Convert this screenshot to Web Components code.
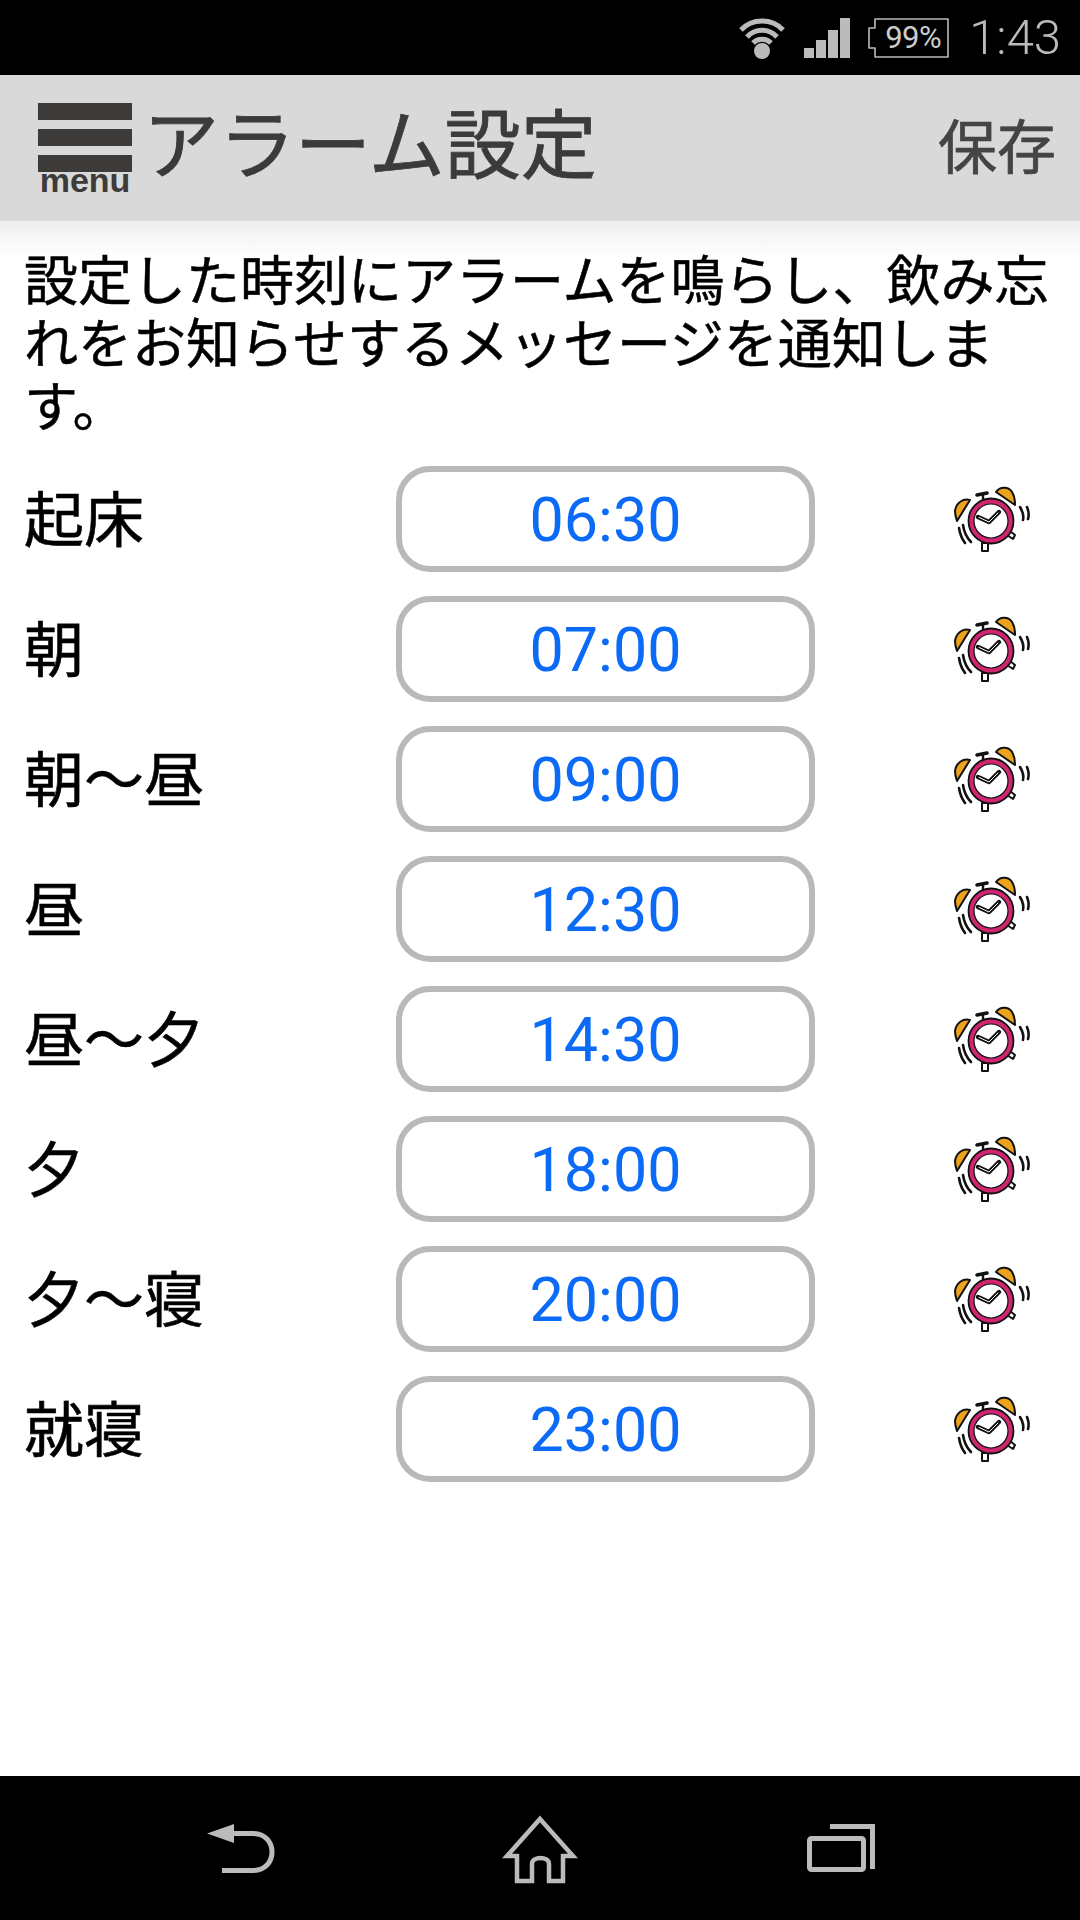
<!DOCTYPE html>
<html lang="ja">
<head>
<meta charset="utf-8">
<title>アラーム設定</title>
<style>
  html, body { margin: 0; padding: 0; background: #fff; }
  body { font-family: "Noto Sans CJK JP", "Noto Sans", sans-serif; }
</style>
</head>
<body>
<alarm-app></alarm-app>

<script>
const CJK = '"Noto Sans CJK JP", "Noto Sans", sans-serif';

class StatusBar extends HTMLElement {
    constructor() {
        super();
        this.attachShadow({ mode: 'open' });
        this.shadowRoot.innerHTML = `
<style>
  :host { display: flex; align-items: center; justify-content: flex-end; height: 75px; background: #000; color: #bbb; padding-right: 19px; box-sizing: border-box; font-family: Roboto, sans-serif; }
  svg { display: block; }
  .wifi { margin-right: 19px; }
  .signal { margin-right: 17px; }
  .battery { position: relative; width: 82px; height: 40px; margin-right: 20px; }
  .pct { position: absolute; left: 10px; right: 0; top: 0; bottom: 0; display: flex; align-items: center; justify-content: center; font-size: 31px; color: #ccc; letter-spacing: -0.5px; }
  .time { font-size: 49px; font-weight: 300; line-height: 75px; }
</style>
<svg class="wifi" width="46" height="42" viewBox="0 0 46 42" fill="none" stroke="#bbb" stroke-width="5">
  <path d="M2 13 C13 1 33 1 44 13"/>
  <path d="M8 20 C16 11 30 11 38 20"/>
  <path d="M14 26 C19 21 27 21 32 26"/>
  <circle cx="23" cy="34" r="8" fill="#bbb" stroke="none"/>
</svg>
<svg class="signal" width="46" height="40" viewBox="0 0 46 40" fill="#bbb">
  <rect x="0" y="30" width="10" height="10"/>
  <rect x="12" y="22" width="10" height="18"/>
  <rect x="24" y="12" width="10" height="28"/>
  <rect x="36" y="0" width="10" height="40"/>
</svg>
<div class="battery">
  <svg width="82" height="40" viewBox="0 0 82 40" fill="none" stroke="#bbb" stroke-width="1.6">
    <path d="M8 1 H81 V39 H8 V30 H2 V10 H8 Z" stroke-linejoin="round"/>
  </svg>
  <span class="pct">99%</span>
</div>
<span class="time">1:43</span>`;
    }
}

class AppHeader extends HTMLElement {
    constructor() {
        super();
        this.attachShadow({ mode: 'open' });
        this.shadowRoot.innerHTML = `
<style>
  :host { display: flex; align-items: center; height: 147px; background: #d9d9d9; color: #3d3a3a; padding: 0 24px 0 38px; box-sizing: border-box; position: relative; border-bottom: 1px solid #cfcfcf; }
  :host::after { content: ""; position: absolute; left: 0; right: 0; top: 100%; height: 36px; background: linear-gradient(#eeeeee, #fff); }
  .menu { width: 94px; height: 88px; margin-bottom: 2px; display: flex; flex-direction: column; gap: 9px; flex: none; position: relative; }
  .bar { height: 17px; background: #3d3a3a; }
  .menu span { position: absolute; left: 0; right: 0; top: 60px; font: bold 34px/34px "Liberation Sans", sans-serif; text-align: center; }
  h1 { flex: 1; margin: 0 0 16px 11px; font: 400 76px/1 ${CJK}; -webkit-text-stroke: 0.8px #3d3a3a; }
  .save { font: 400 59px/1 ${CJK}; color: #444; margin-bottom: 9px; -webkit-text-stroke: 0.7px #444; }
</style>
<div class="menu"><div class="bar"></div><div class="bar"></div><div class="bar"></div><span>menu</span></div>
<h1><slot name="title"></slot></h1>
<div class="save"><slot name="action"></slot></div>`;
    }
}

class AlarmClock extends HTMLElement {
    constructor() {
        super();
        this.attachShadow({ mode: 'open' });
        this.shadowRoot.innerHTML = `
<style>
  :host { display: block; width: 84px; height: 72px; }
  svg { display: block; }
</style>
<svg width="84" height="72" viewBox="0 0 84 72" fill="none" stroke="#111" stroke-linecap="round" stroke-linejoin="round">
  <path d="M20 17 C13 15 6 20 5 28 C5 32 6 35 7 38 Z" fill="#eea31c" stroke-width="2"/>
  <path d="M46 9 C50 3 60 3 63 11 C65 15 65 19 65 22 Z" fill="#eea31c" stroke-width="2"/>
  <path d="M33 11 L33 16" stroke-width="2.4"/>
  <path d="M27 12 L37 10" stroke-width="3.6"/>
  <path d="M32 60 L32 68 L38 68 L38 60 Z" fill="#fff" stroke-width="2"/>
  <path d="M57 52 L63 56 L65 52 L60 48 Z" fill="#fff" stroke-width="2"/>
  <circle cx="41" cy="38" r="22.5" fill="#d1266f" stroke-width="1.8"/>
  <circle cx="41" cy="38" r="17" fill="#fff" stroke-width="1.2"/>
  <path d="M28 34 L39 39 L49 29" stroke-width="4.4"/>
  <path d="M29 34.4 L39 39 L48 30" stroke="#fff" stroke-width="1"/>
  <path d="M70 24 C73 29 74 33 73 37 M77 24 C79 29 79 33 78 36" stroke-width="2.6"/>
  <path d="M9 45 C10 51 12 56 15 60 M13 42 C14 49 17 55 21 59" stroke-width="2.6"/>
</svg>`;
    }
}

class AlarmRow extends HTMLElement {
    constructor() {
        super();
        this.attachShadow({ mode: 'open' });
        this.shadowRoot.innerHTML = `
<style>
  :host { display: grid; grid-template-columns: 372px 419px 1fr; align-items: center; height: 105px; }
  .label { font: 400 60px/1 ${CJK}; color: #000; margin-bottom: 6px; -webkit-text-stroke: 0.6px #000; }
  .time { height: 106px; box-sizing: border-box; border: 6px solid #b9b9b9; border-radius: 34px; background: #fff; display: flex; align-items: center; justify-content: center; font: 400 61px/1 Roboto, sans-serif; color: #0b6bf6; padding-top: 3px; }
  .wrap { display: flex; justify-content: flex-start; padding-left: 135px; }
</style>
<div class="label"><slot name="label"></slot></div>
<div class="time"><slot name="time"></slot></div>
<div class="wrap"><alarm-clock></alarm-clock></div>`;
    }
}

class NavBar extends HTMLElement {
    constructor() {
        super();
        this.attachShadow({ mode: 'open' });
        this.shadowRoot.innerHTML = `
<style>
  :host { display: flex; height: 144px; background: #000; padding-top: 39px; box-sizing: border-box; align-items: flex-start; padding-left: 207px; }
  svg { display: block; flex: none; }
</style>
<svg width="68" height="50" viewBox="0 0 68 50" style="margin-top:9px" fill="none" stroke="#bbb" stroke-width="5">
  <path d="M0 9.5 L27 0 L27 19 Z" fill="#bbb" stroke="none"/>
  <path d="M25 9.5 H46 C58 9.5 65 18 65 28 C65 38 58 46.5 46 46.5 H15"/>
</svg>
<svg width="78" height="70" viewBox="0 0 78 70" style="margin-left:226px" fill="none" stroke="#bbb" stroke-width="4.5" stroke-linejoin="miter">
  <path d="M39 4 L72 41 H62 V66 H48 V49 C48 41 31 41 31 49 V66 H16 V41 H6 Z"/>
</svg>
<svg width="68" height="48" viewBox="0 0 68 48" style="margin-left:228px;margin-top:9px" fill="none" stroke="#bbb" stroke-width="5">
  <rect x="2.5" y="14.5" width="54" height="31" rx="2"/>
  <path d="M23 2.5 H65.5 V45"/>
</svg>`;
    }
}

class AlarmApp extends HTMLElement {
    constructor() {
        super();
        this.attachShadow({ mode: 'open' });
        const rows = [
            ['起床', '06:30'], ['朝', '07:00'], ['朝～昼', '09:00'], ['昼', '12:30'],
            ['昼～夕', '14:30'], ['夕', '18:00'], ['夕～寝', '20:00'], ['就寝', '23:00']
        ];
        this.shadowRoot.innerHTML = `
<style>
  :host { display: flex; flex-direction: column; width: 1080px; height: 1920px; overflow: hidden; background: #fff; }
  main { flex: 1; padding: 24px 25px 0 24px; position: relative; z-index: 1; }
  p { margin: 0 0 31px; font: 400 54px/63px ${CJK}; color: #000; -webkit-text-stroke: 0.5px #000; }
  .rows { display: flex; flex-direction: column; gap: 25px; }
</style>
<status-bar></status-bar>
<app-header><span slot="title">アラーム設定</span><span slot="action">保存</span></app-header>
<main>
  <p>設定した時刻にアラームを鳴らし、飲み忘れをお知らせするメッセージを通知します。</p>
  <div class="rows">
    ${rows.map(r => `<alarm-row><span slot="label">${r[0]}</span><span slot="time">${r[1]}</span></alarm-row>`).join('')}
  </div>
</main>
<nav-bar></nav-bar>`;
    }
}

window.customElements.define('status-bar', StatusBar);
window.customElements.define('app-header', AppHeader);
window.customElements.define('alarm-clock', AlarmClock);
window.customElements.define('alarm-row', AlarmRow);
window.customElements.define('nav-bar', NavBar);
window.customElements.define('alarm-app', AlarmApp);
</script>
</body>
</html>
